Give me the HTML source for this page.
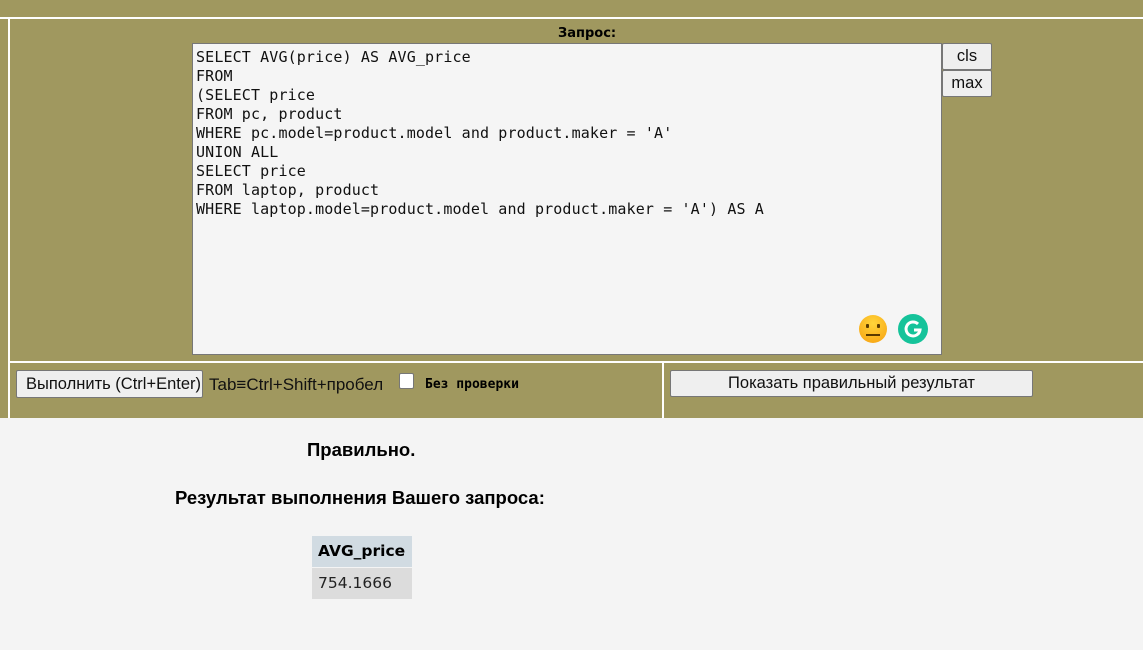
<!DOCTYPE html>
<html><head><meta charset="utf-8"><style>
body{margin:0;width:1143px;height:650px;background:#f4f4f4;position:relative;overflow:hidden;font-family:"Liberation Sans",Arial,sans-serif}
.ol{position:absolute;left:0;top:0;width:1143px;height:418px;background:#a0985f}
.l{position:absolute;background:#fff}
.ta{position:absolute;left:192px;top:43px;width:750px;height:312px;background:#f5f5f5;border:1px solid #777;font-family:"DejaVu Sans Mono",monospace;font-size:15px;letter-spacing:0.13px;line-height:19px;padding:4px 3px;box-sizing:border-box;white-space:pre;color:#111}
.btn{position:absolute;background:#efefef;border:1px solid #777;border-radius:2px;font-size:16.5px;color:#111;text-align:center;box-sizing:border-box;white-space:nowrap}
.t{position:absolute;white-space:nowrap}
</style></head><body>
<div class="ol"></div>
<div class="l" style="left:0;top:17px;width:1143px;height:2px"></div>
<div class="l" style="left:8px;top:17px;width:2px;height:401px"></div>
<div class="l" style="left:8px;top:361px;width:1135px;height:2px"></div>
<div class="l" style="left:662px;top:361px;width:2px;height:57px"></div>
<div class="t" style="left:558px;top:26px;font-family:'DejaVu Sans';font-weight:bold;font-size:13px">Запрос:</div>
<div class="ta">SELECT AVG(price) AS AVG_price
FROM
(SELECT price
FROM pc, product
WHERE pc.model=product.model and product.maker = 'A'
UNION ALL
SELECT price
FROM laptop, product
WHERE laptop.model=product.model and product.maker = 'A') AS A</div>
<div style="position:absolute;left:859px;top:315px;width:28px;height:28px;border-radius:50%;background:radial-gradient(circle at 50% 30%,#ffd43a,#f7a010)"></div>
<div style="position:absolute;left:866px;top:324px;width:3px;height:4px;background:#5a3a00;border-radius:1px"></div>
<div style="position:absolute;left:877px;top:324px;width:3px;height:4px;background:#5a3a00;border-radius:1px"></div>
<div style="position:absolute;left:866px;top:334px;width:14px;height:2px;background:#5a3a00"></div>
<div style="position:absolute;left:898px;top:314px;width:30px;height:30px;border-radius:50%;background:#15c39a"></div>
<svg style="position:absolute;left:898px;top:314px" width="30" height="30"><path d="M20 10 A7 7 0 1 0 22 16 H16" fill="none" stroke="#fff" stroke-width="3"/></svg>
<div class="btn" style="left:942px;top:43px;width:50px;height:27px;line-height:25px">cls</div>
<div class="btn" style="left:942px;top:70px;width:50px;height:27px;line-height:25px">max</div>
<div class="btn" style="left:16px;top:370px;width:187px;height:28px;line-height:26px;text-align:left;padding-left:9px;overflow:hidden">Выполнить (Ctrl+Enter)</div>
<div class="t" style="left:209px;top:375px;font-size:17px;color:#111">Tab≡Ctrl+Shift+пробел</div>
<div style="position:absolute;left:399px;top:373px;width:13px;height:14px;background:#fff;border:1px solid #777;border-radius:2px"></div>
<div class="t" style="left:425px;top:377px;font-family:'DejaVu Sans Mono';font-weight:bold;font-size:13px">Без проверки</div>
<div class="btn" style="left:670px;top:370px;width:363px;height:27px;line-height:25px">Показать правильный результат</div>
<div class="t" style="left:307px;top:439px;font-weight:bold;font-size:18.5px">Правильно.</div>
<div class="t" style="left:175px;top:487px;font-weight:bold;font-size:18.5px">Результат выполнения Вашего запроса:</div>
<div class="t" style="left:312px;top:536px;width:100px;height:31px;background:#d1dbe2;font-family:'DejaVu Sans';font-weight:bold;font-size:15.5px;line-height:31px;padding-left:6px;box-sizing:border-box">AVG_price</div>
<div class="t" style="left:312px;top:568px;width:100px;height:31px;background:#dcdcdc;font-family:'DejaVu Sans';font-size:15.5px;line-height:31px;padding-left:6px;box-sizing:border-box;color:#222">754.1666</div>
</body></html>
